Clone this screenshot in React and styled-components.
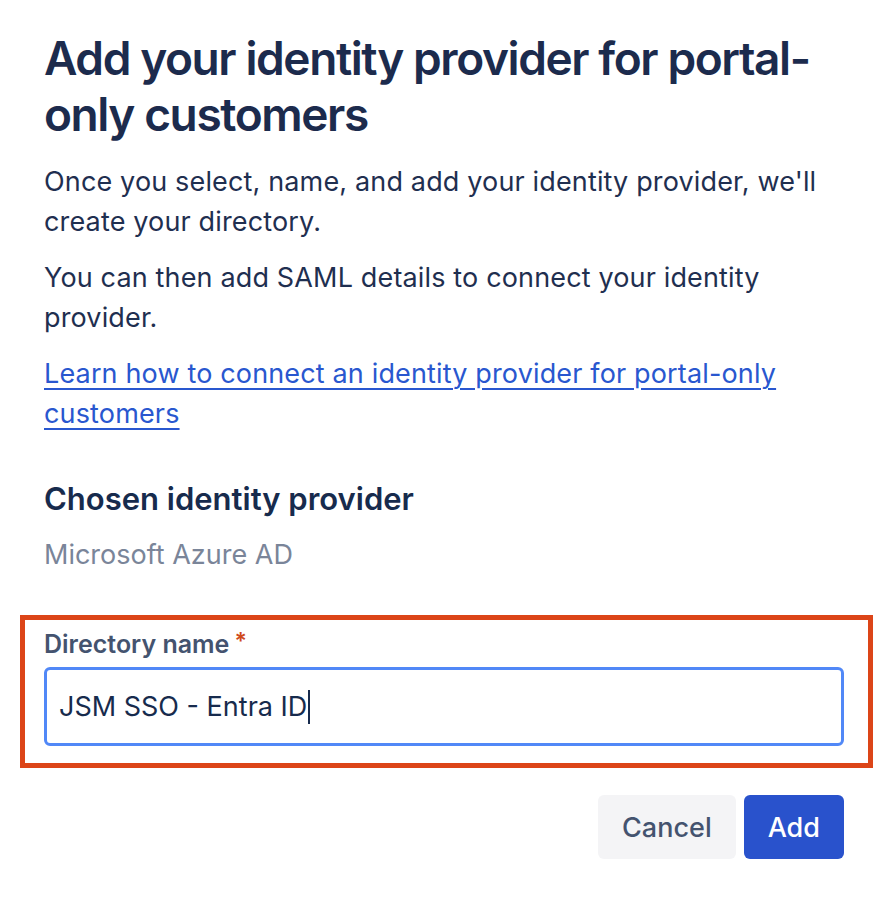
import React from "react";
import styled, { createGlobalStyle } from "styled-components";

const GlobalStyle = createGlobalStyle`
  html, body {
    margin: 0;
    padding: 0;
    background: #ffffff;
  }
  body {
    font-family: Inter, "Noto Sans", "Liberation Sans", sans-serif;
    color: #172b4d;
  }
`;

const Page = styled.div`
  width: 890px;
  height: 910px;
  box-sizing: border-box;
  padding: 30px 46px 0 44px;
  display: flex;
  flex-direction: column;
`;

const Title = styled.h1`
  margin: 0;
  font-size: 46px;
  line-height: 56px;
  font-weight: 600;
  letter-spacing: -1.4px;
  color: #1c2b4d;
`;

const Text = styled.p`
  margin: ${(p) => p.$top || 0}px 0 0;
  font-size: 27px;
  line-height: 40px;
  font-weight: 400;
  letter-spacing: 0.15px;
  color: #1f2f50;
`;

const Link = styled.a`
  color: #2957cf;
  text-decoration: underline;
  text-underline-offset: 5px;
  text-decoration-thickness: 2px;
  cursor: pointer;
`;

const SubHeading = styled.h2`
  margin: 45px 0 0;
  font-size: 31px;
  line-height: 40px;
  font-weight: 600;
  color: #172b4d;
`;

const Muted = styled.div`
  margin-top: 16px;
  font-size: 27px;
  line-height: 40px;
  color: #7a8599;
`;

const Highlight = styled.div`
  margin: 40px -29px 0 -24px;
  border: 5px solid #dc4518;
  padding: 8px 24px 17px 19px;
  display: flex;
  flex-direction: column;
  gap: 7px;
`;

const Label = styled.label`
  font-size: 25px;
  line-height: 32px;
  font-weight: 600;
  color: #44536f;
  display: flex;
  align-items: center;
`;

const Required = styled.span`
  color: #cf4a1c;
  margin-left: 5px;
  font-size: 23px;
  position: relative;
  top: -3px;
`;

const Field = styled.div`
  height: 79px;
  box-sizing: border-box;
  border: 3px solid #5188f7;
  border-radius: 6px;
  display: flex;
  align-items: center;
  padding: 0 12px;
  font-size: 27px;
  color: #172b4d;
`;

const Caret = styled.span`
  display: inline-block;
  width: 2px;
  height: 34px;
  background: #172b4d;
  margin-left: 1px;
  vertical-align: middle;
`;

const Actions = styled.div`
  margin-top: 27px;
  display: flex;
  justify-content: flex-end;
  gap: 8px;
`;

const Button = styled.button`
  height: 64px;
  padding: 0 24px;
  border: none;
  border-radius: 6px;
  font-family: inherit;
  font-size: 27px;
  font-weight: 500;
  background: ${(p) => (p.$primary ? "#2952cc" : "#f4f4f6")};
  color: ${(p) => (p.$primary ? "#ffffff" : "#44536f")};
  cursor: pointer;
`;

export default function App() {
  return (
    <>
      <GlobalStyle />
      <Page>
        <Title>
          Add your identity provider for portal-
          <br />
          only customers
        </Title>
        <Text $top={20}>
          Once you select, name, and add your identity provider, we'll create
          your directory.
        </Text>
        <Text $top={16}>
          You can then add SAML details to connect your identity provider.
        </Text>
        <Text $top={16}>
          <Link>Learn how to connect an identity provider for portal-only customers</Link>
        </Text>
        <SubHeading>Chosen identity provider</SubHeading>
        <Muted>Microsoft Azure AD</Muted>
        <Highlight>
          <Label>
            Directory name<Required>*</Required>
          </Label>
          <Field>
            JSM SSO - Entra ID<Caret />
          </Field>
        </Highlight>
        <Actions>
          <Button>Cancel</Button>
          <Button $primary>Add</Button>
        </Actions>
      </Page>
    </>
  );
}
